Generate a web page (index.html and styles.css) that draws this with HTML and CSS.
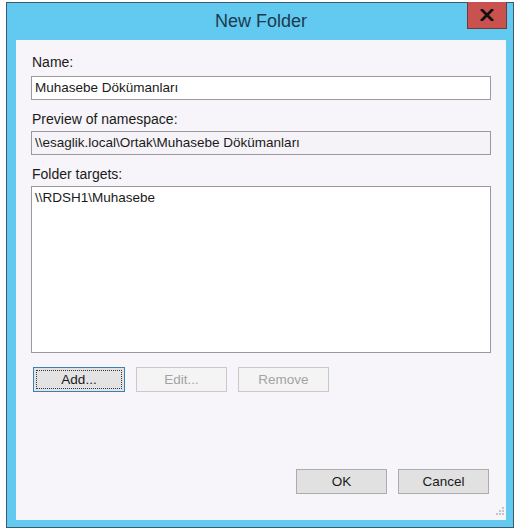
FILE: index.html
```html
<!DOCTYPE html>
<html>
<head>
<meta charset="utf-8">
<link rel="stylesheet" href="styles.css">
</head>
<body>
<div class="window">
  <div class="titlebar">
    <span class="title">New Folder</span>
    <div class="close"><svg width="14" height="12" viewBox="0 0 14 12"><path d="M2 1 L12 11 M12 1 L2 11" stroke="#111" stroke-width="2.8" stroke-linecap="square"/></svg></div>
  </div>
  <div class="client">
    <div class="label">Name:</div>
    <div class="field">Muhasebe Dökümanları</div>
    <div class="label gap">Preview of namespace:</div>
    <div class="field readonly">\\esaglik.local\Ortak\Muhasebe Dökümanları</div>
    <div class="label gap">Folder targets:</div>
    <div class="list"><div class="item">\\RDSH1\Muhasebe</div></div>
    <div class="row">
      <div class="btn focused"><span class="focus">Add...</span></div>
      <div class="btn disabled">Edit...</div>
      <div class="btn disabled">Remove</div>
    </div>
    <div class="footer">
      <div class="btn">OK</div>
      <div class="btn">Cancel</div>
    </div>
    <svg class="grip" width="9" height="9" viewBox="0 0 9 9">
      <rect x="7" y="1" width="2" height="2" fill="#c4c4c8"/>
      <rect x="4" y="4" width="2" height="2" fill="#c4c4c8"/>
      <rect x="7" y="4" width="2" height="2" fill="#c4c4c8"/>
      <rect x="1" y="7" width="2" height="2" fill="#c4c4c8"/>
      <rect x="4" y="7" width="2" height="2" fill="#c4c4c8"/>
      <rect x="7" y="7" width="2" height="2" fill="#c4c4c8"/>
    </svg>
  </div>
</div>
</body>
</html>
```
FILE: styles.css
```css
html, body {
  margin: 0;
  padding: 0;
  background: #ffffff;
}
body {
  font-family: "Liberation Sans", Arial, sans-serif;
  font-size: 13.5px;
  color: #1a1a1a;
}
.window {
  position: relative;
  box-sizing: border-box;
  margin: 2px 0 0 6px;
  width: 508px;
  height: 526px;
  background: #62c9f0;
  border: 1px solid #3d5a6c;
  display: flex;
  flex-direction: column;
}
.titlebar {
  height: 37px;
  display: flex;
  align-items: center;
  justify-content: center;
}
.title {
  font-size: 18px;
  color: #1d3a4e;
  margin-left: 2px;
  margin-top: -1px;
}
.close {
  position: absolute;
  top: -1px;
  right: 6px;
  width: 40px;
  height: 27px;
  box-sizing: border-box;
  background: #c9524f;
  border: 1px solid #6e3a3a;
  border-top: none;
  display: flex;
  align-items: center;
  justify-content: center;
}
.client {
  position: relative;
  flex: 1;
  margin: 0 7px 7px 9px;
  background: #f7f5f9;
  padding: 14px 15px 0 15px;
  display: flex;
  flex-direction: column;
}
.label {
  height: 16px;
  line-height: 16px;
  padding-left: 1px;
  font-size: 14px;
}
.label.gap {
  margin-top: 11px;
}
.field {
  margin-top: 6px;
  box-sizing: border-box;
  width: 460px;
  height: 24px;
  line-height: 22px;
  border: 1px solid #9a9a9e;
  background: #ffffff;
  padding-left: 3px;
  white-space: nowrap;
}
.field.readonly {
  margin-top: 4px;
  background: #f5f3f7;
}
.list {
  margin-top: 4px;
  box-sizing: border-box;
  width: 460px;
  height: 167px;
  border: 1px solid #9a9a9e;
  background: #ffffff;
  padding: 3px 0 0 3px;
}
.row {
  margin-top: 14px;
  margin-left: 2px;
  display: flex;
  gap: 11px;
}
.btn {
  box-sizing: border-box;
  width: 91px;
  height: 25px;
  border: 1px solid #acacac;
  background: #e1e1e1;
  display: flex;
  align-items: center;
  justify-content: center;
}
.btn.disabled {
  background: #f4f4f4;
  border-color: #c9c9c9;
  color: #a3a3a3;
}
.btn.focused {
  width: 92px;
  border-color: #3c7fb1;
  background: #e3e3e3;
  padding: 2px;
}
.focus {
  flex: 1;
  align-self: stretch;
  display: flex;
  align-items: center;
  justify-content: center;
  border: 1px dotted #333;
}
.footer {
  margin-top: auto;
  margin-bottom: 26px;
  margin-right: 2px;
  display: flex;
  justify-content: flex-end;
  gap: 11px;
}
.grip {
  position: absolute;
  right: 2px;
  bottom: 5px;
}
```
